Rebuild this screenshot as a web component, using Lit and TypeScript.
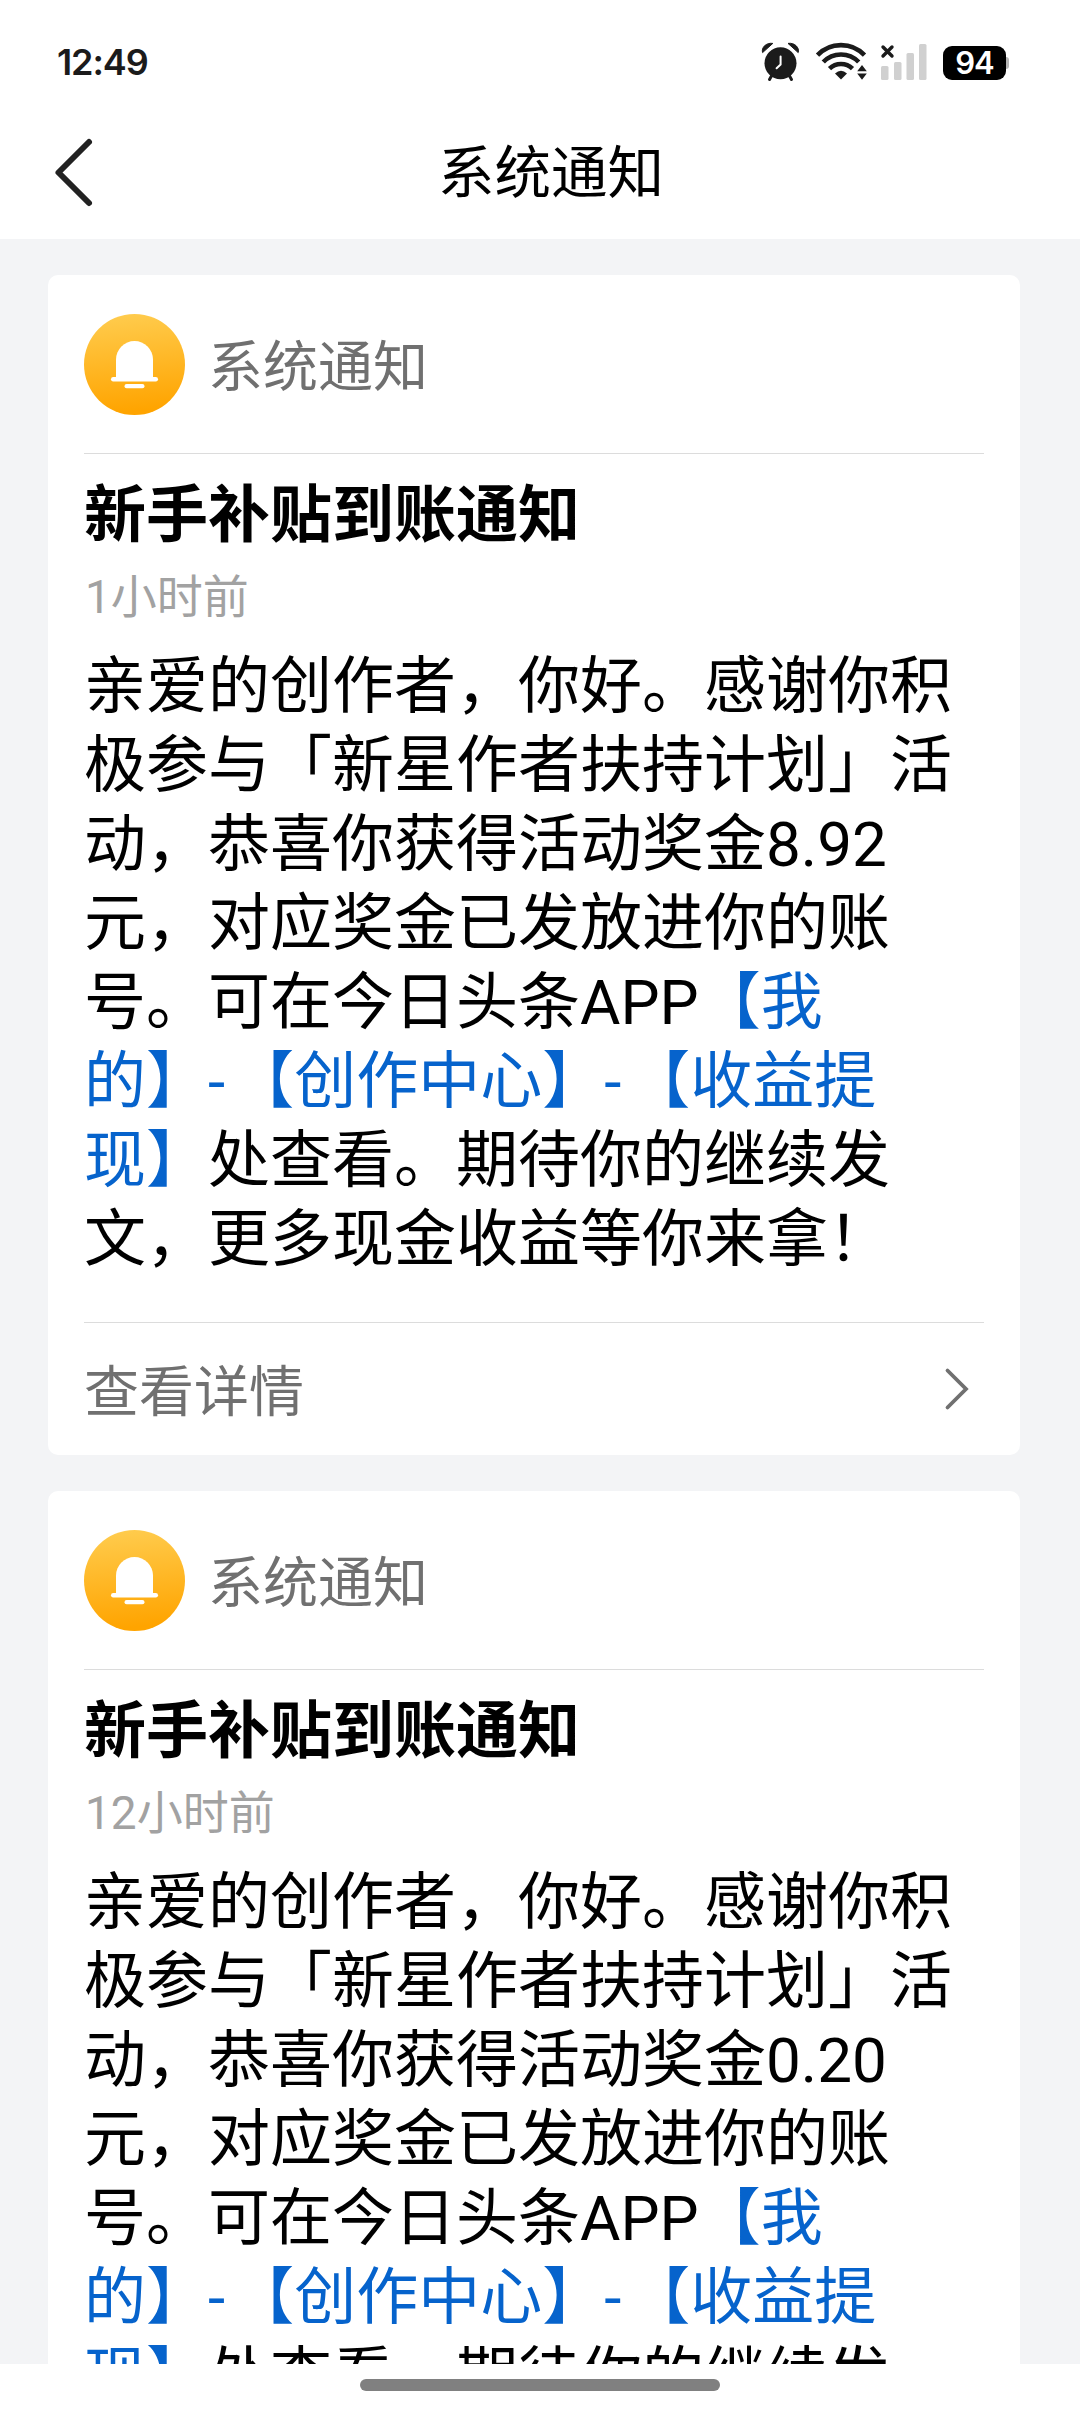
import { LitElement, html, css } from "lit";
import { customElement, property } from "lit/decorators.js";

@customElement("status-bar")
class StatusBar extends LitElement {
  static styles = css`
    :host {
      display: flex;
      align-items: center;
      height: 124px;
      padding: 0 71px 0 57px;
      box-sizing: border-box;
    }
    .time {
      flex: 1;
      font: 600 36px/44px Inter, Roboto, sans-serif;
      letter-spacing: -1.1px;
      color: #1b1b1b;
      padding-bottom: 1px;
    }
    svg {
      display: block;
    }
    .battery {
      display: flex;
      align-items: center;
      padding-top: 2px;
      margin-left: 15px;
    }
    .level {
      width: 63px;
      height: 34px;
      border-radius: 9px;
      background: #000;
      color: #fff;
      text-align: center;
      font: 600 31px/34px Inter, Roboto, sans-serif;
      letter-spacing: -1px;
    }
    .nub {
      width: 3px;
      height: 12px;
      border-radius: 0 3px 3px 0;
      background: #b5b5b5;
    }
  `;

  render() {
    return html`
      <span class="time">12:49</span>
      <svg width="167" height="44" viewBox="761 40 167 44" fill="none">
        <g fill="#1b1b1b">
          <circle cx="780.5" cy="63.3" r="16" />
          <path d="M762.6 52.6C761 48 766 42.3 772.8 43.4z" stroke="#1b1b1b" stroke-linejoin="round" />
          <path d="M798.2 52.6C799.8 48 794.8 42.3 788 43.4z" stroke="#1b1b1b" stroke-linejoin="round" />
        </g>
        <path d="M772 75l-2.5 4.5M789 75l2.5 4.5" stroke="#1b1b1b" stroke-width="3" stroke-linecap="round" />
        <path d="M780.6 56.5v8l-4 3.8" stroke="#fff" stroke-width="2" stroke-linecap="round" stroke-linejoin="round" />
        <g stroke="#1b1b1b" stroke-width="4.6">
          <path d="M817.5 55.2A32.5 32.5 0 0 1 864.5 55.2" />
          <path d="M823.3 62A24.5 24.5 0 0 1 858.7 62" />
          <path d="M829.5 68.6A16.5 16.5 0 0 1 852.5 68.6" />
        </g>
        <path d="M841 79.6l-6-6.2q6-5.4 12 0z" fill="#1b1b1b" />
        <path d="M862 65l4.8 6.2h-9.6zM862 79.8l4.8-6.2h-9.6z" fill="#1b1b1b" />
        <path d="M883 47l9 9M892 47l-9 9" stroke="#1b1b1b" stroke-width="3.4" stroke-linecap="round" />
        <g fill="#d0d0d0">
          <rect x="881" y="66" width="7.5" height="14" rx="1.5" />
          <rect x="894" y="62" width="7.5" height="18" rx="1.5" />
          <rect x="906.5" y="53" width="7.5" height="27" rx="1.5" />
          <rect x="919" y="44" width="7.5" height="36" rx="1.5" />
        </g>
      </svg>
      <span class="battery"><span class="level">94</span><span class="nub"></span></span>
    `;
  }
}

@customElement("notice-card")
class NoticeCard extends LitElement {
  @property() time = "";
  @property() amount = "";

  static styles = css`
    :host {
      display: block;
      height: 1180px;
      flex: none;
      box-sizing: border-box;
      padding: 0 36px;
      border-radius: 10px;
      background: #fff;
    }
    .source {
      display: flex;
      align-items: center;
      gap: 23px;
      height: 179px;
      box-sizing: border-box;
      border-bottom: 1px solid #dcdcdc;
      font-size: 55px;
      color: #707070;
    }
    .label {
      padding-bottom: 4px;
    }
    .title {
      padding-top: 22px;
      font-size: 62px;
      line-height: 80px;
      font-weight: 700;
      color: #000;
    }
    .time {
      padding: 11px 0 0 1px;
      font-size: 46px;
      line-height: 60px;
      color: #a2a2a2;
    }
    .body {
      margin: 0;
      padding: 20px 30px 0 0;
      height: 695px;
      box-sizing: border-box;
      font-size: 62px;
      line-height: 79px;
      color: #000;
    }
    .link {
      color: #0663cc;
    }
    .dash {
      letter-spacing: 7px;
    }
    .more {
      display: flex;
      align-items: center;
      justify-content: space-between;
      height: 132px;
      box-sizing: border-box;
      border-top: 1px solid #dcdcdc;
      padding-right: 14px;
      font-size: 55px;
      color: #707070;
    }
  `;

  render() {
    return html`
      <div class="source">
        <svg width="101" height="101" viewBox="0 0 101 101">
          <defs>
            <linearGradient id="g" x1="0" y1="0" x2="0.1" y2="1">
              <stop offset="0" stop-color="#ffcd50" />
              <stop offset="1" stop-color="#ffa400" />
            </linearGradient>
          </defs>
          <circle cx="50.5" cy="50.5" r="50.5" fill="url(#g)" />
          <path d="M32 65V45.5a18.5 18.5 0 0 1 37 0V65z" fill="#fff" />
          <rect x="27" y="63" width="47" height="4.5" rx="2.2" fill="#fff" />
          <rect x="40.5" y="70" width="20" height="4.3" rx="2.1" fill="#fff" />
        </svg>
        <span class="label">系统通知</span>
      </div>
      <div class="title">新手补贴到账通知</div>
      <div class="time">${this.time}</div>
      <p class="body">亲爱的创作者，你好。感谢你积极参与「新星作者扶持计划」活动，恭喜你获得活动奖金${this.amount}元，对应奖金已发放进你的账号。可在今日头条APP<span class="link">【我的】<span class="dash">-</span>【创作中心】<span class="dash">-</span>【收益提现】</span>处查看。期待你的继续发文，更多现金收益等你来拿！</p>
      <div class="more">
        <span class="label">查看详情</span>
        <svg width="26" height="44" viewBox="0 0 26 44" fill="none">
          <path d="M3.5 3.5L22 22L3.5 40.5" stroke="#707070" stroke-width="3.8" stroke-linecap="round" />
        </svg>
      </div>
    `;
  }
}

@customElement("app-root")
class AppRoot extends LitElement {
  static styles = css`
    :host {
      display: flex;
      flex-direction: column;
      width: 1080px;
      height: 2412px;
      overflow: hidden;
      background: #fff;
      font-family: Roboto, "Noto Sans CJK SC", sans-serif;
      text-spacing-trim: space-all;
    }
    .nav {
      display: grid;
      grid-template-columns: 95px 1fr 73px;
      align-items: center;
      height: 115px;
      flex: none;
      box-sizing: border-box;
      padding-bottom: 18px;
    }
    .back {
      justify-self: end;
      display: block;
    }
    .heading {
      padding-top: 2px;
      text-align: center;
      font-size: 56.5px;
      line-height: 80px;
      color: #000;
    }
    .list {
      display: flex;
      flex-direction: column;
      gap: 36px;
      height: 2125px;
      flex: none;
      box-sizing: border-box;
      padding: 36px 60px 0 48px;
      overflow: hidden;
      background: #f3f4f6;
    }
    .gesture {
      flex: 1;
      display: flex;
      justify-content: center;
      padding-top: 15px;
    }
    .handle {
      width: 360px;
      height: 12px;
      border-radius: 6px;
      background: #808080;
    }
  `;

  render() {
    return html`
      <status-bar></status-bar>
      <div class="nav">
        <svg class="back" width="42" height="72" viewBox="53 137 42 72" fill="none">
          <path d="M89 142L58.5 172.5L89 203" stroke="#222" stroke-width="6" stroke-linecap="round" stroke-linejoin="round" />
        </svg>
        <div class="heading">系统通知</div>
      </div>
      <div class="list">
        <notice-card time="1小时前" amount="8.92"></notice-card>
        <notice-card time="12小时前" amount="0.20"></notice-card>
      </div>
      <div class="gesture"><div class="handle"></div></div>
    `;
  }
}
